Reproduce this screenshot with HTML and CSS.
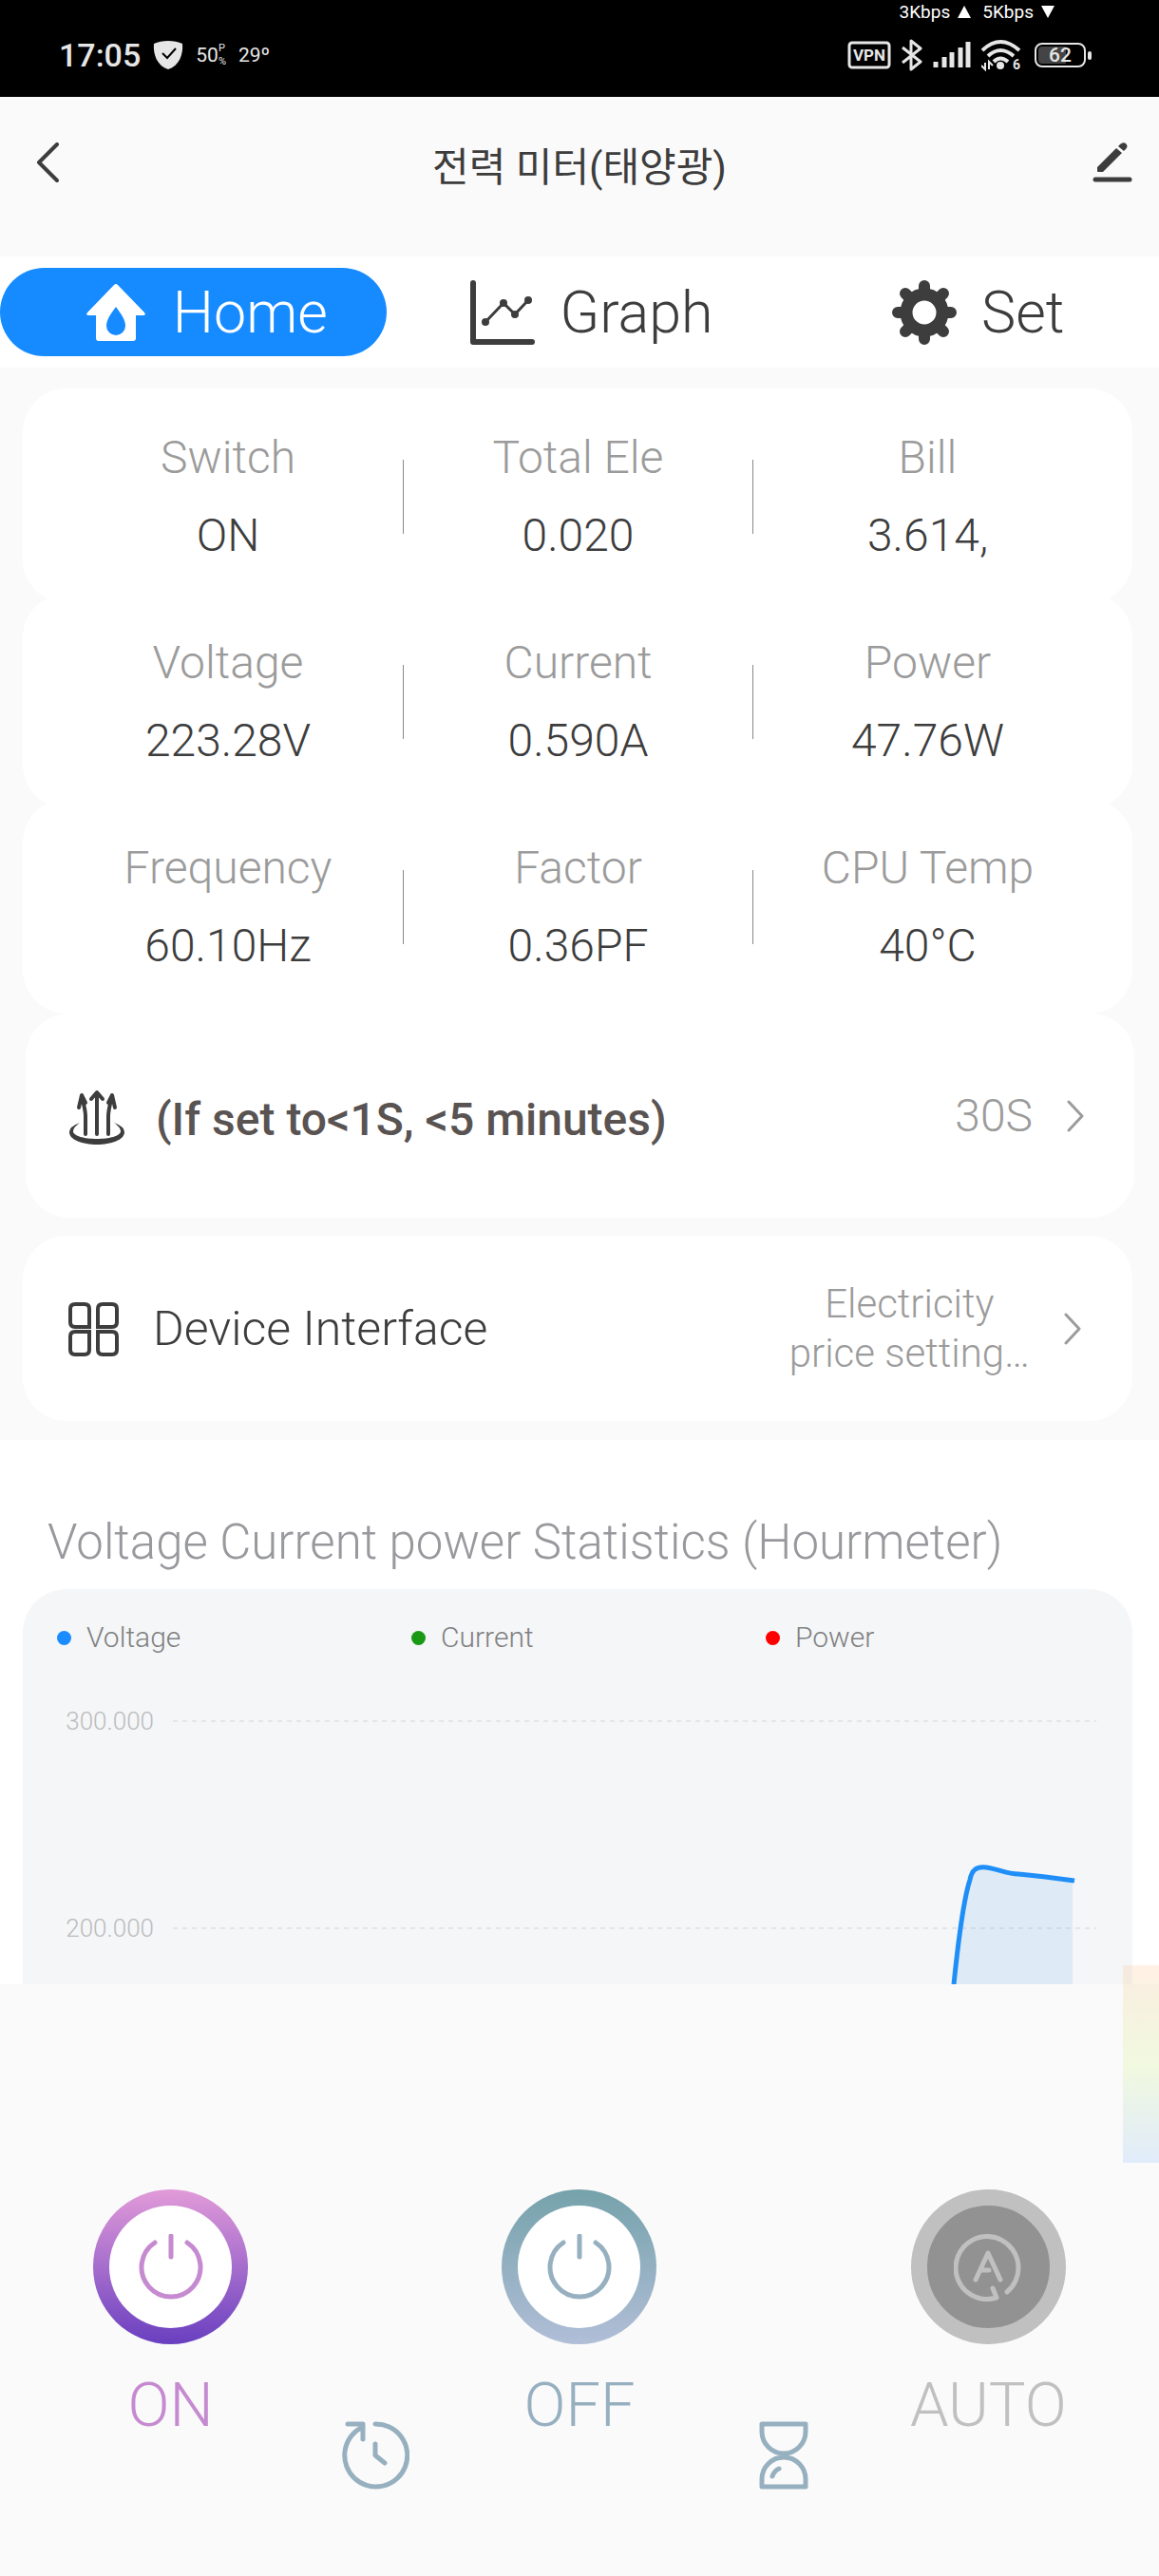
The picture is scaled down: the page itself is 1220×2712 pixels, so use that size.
FILE: index.html
```html
<!doctype html>
<html lang="ko">
<head>
	<meta charset="utf-8">
	<meta name="viewport" content="width=device-width">
	<title>전력 미터(태양광)</title>
	<link rel="stylesheet" href="styles.css">
</head>
<body>
<div class="status">
	<div class="status-net"><span>3Kbps</span><i class="up"></i><span>5Kbps</span><i class="down"></i></div>
	<div class="status-row">
		<div class="status-left">
			<span class="time">17:05</span>
			<svg width="32" height="30" viewBox="0 0 32 30"><path d="M16 0C11 0 5 1 1 3C0 14 4 26 16 30C28 26 32 14 31 3C27 1 21 0 16 0Z" fill="#e6e6e6"/><path d="M10 13L15 18L24 8" fill="none" stroke="#000" stroke-width="2"/></svg>
			<span class="mini">50<span class="mini-side"><b>P</b><b>%</b></span></span>
			<span class="mini">29º</span>
		</div>
		<div class="status-right">
			<svg width="46" height="30" viewBox="0 0 46 30"><rect x="2" y="2" width="42" height="26" rx="3" fill="none" stroke="#e6e6e6" stroke-width="3"/><text x="23" y="21" class="vpn">VPN</text></svg>
			<svg width="22" height="34" viewBox="0 0 22 34"><path d="M1 9L20 24L10 32V2L20 10L1 25" fill="none" stroke="#e6e6e6" stroke-width="3" stroke-linejoin="round"/></svg>
			<svg width="40" height="30" viewBox="0 0 40 30"><path d="M3 28V22M12 28V17M20 28V12M29 28V7M37 28V1" stroke="#e6e6e6" stroke-width="5"/></svg>
			<svg width="44" height="38" viewBox="0 0 44 38"><g fill="none" stroke="#e6e6e6" stroke-width="4"><path d="M1 14Q20-4 40 14"/><path d="M7 20Q20 8 34 20"/><path d="M13 26Q20 19 28 26"/></g><circle cx="20" cy="30" r="4" fill="#e6e6e6"/><path d="M4 27V34L0 30M8 34V26L12 30" fill="none" stroke="#e6e6e6" stroke-width="2"/><text x="37" y="34" class="wifi-gen">6</text></svg>
			<svg width="62" height="28" viewBox="0 0 62 28"><rect x="2" y="2" width="52" height="24" rx="7" fill="none" stroke="#e6e6e6" stroke-width="2"/><path d="M9 5H34V23H9Q5 23 5 19V9Q5 5 9 5Z" fill="#444"/><rect x="57" y="10" width="4" height="9" rx="2" fill="#e6e6e6"/><text x="28" y="21" class="battery">62</text></svg>
		</div>
	</div>
</div>

<header class="header">
	<button class="icon-btn" aria-label="Back"><svg width="24" height="42" viewBox="0 0 24 42"><path d="M22 2L3 21L22 40" fill="none" stroke="#3d3d3d" stroke-width="4" stroke-linecap="round" stroke-linejoin="round"/></svg></button>
	<h1>전력 미터(태양광)</h1>
	<button class="icon-btn" aria-label="Edit"><svg width="42" height="42" viewBox="0 0 42 42"><path d="M3 39H39" stroke="#3d3d3d" stroke-width="5" stroke-linecap="round"/><path d="M5 26L25 6L31 11L11 31H6Q5 31 5 30ZM27 4L29 2Q32-1 35 1Q38 4 35 7L33 9Z" fill="#3d3d3d"/></svg></button>
</header>

<nav class="tabs">
	<button class="tab cur">
		<svg width="68" height="68" viewBox="0 0 68 68"><path d="M34 4Q35 4 36 5L64 34Q66 37 63 37H55V61Q55 64 52 64H16Q13 64 13 61V37H5Q2 37 4 34L32 5Q33 4 34 4Z" fill="#fff"/><path d="M34 28C40 36 44 42 44 48A10 10 0 0 1 24 48C24 42 28 36 34 28Z" fill="#168bff"/></svg>
		<span>Home</span>
	</button>
	<button class="tab">
		<svg width="68" height="68" viewBox="0 0 68 68"><g fill="none" stroke="#3d3d3d" stroke-linecap="round" stroke-linejoin="round"><path d="M3 3V65H65" stroke-width="6"/><path d="M16 44L35 24L47 36L61 21" stroke-width="3"/></g><g fill="#3d3d3d"><circle cx="16" cy="44" r="4"/><circle cx="35" cy="24" r="4"/><circle cx="47" cy="36" r="4"/><circle cx="61" cy="21" r="4"/></g></svg>
		<span>Graph</span>
	</button>
	<button class="tab">
		<svg width="68" height="68" viewBox="0 0 68 68"><circle cx="34" cy="34" r="19" fill="none" stroke="#3d3d3d" stroke-width="13"/><g stroke="#3d3d3d" stroke-width="12" stroke-linecap="round"><path d="M34 6V14M34 54V62M6 34H14M54 34H62M14 14L20 20M48 48L54 54M14 54L20 48M48 20L54 14"/></g></svg>
		<span>Set</span>
	</button>
</nav>

<main>
	<section class="readings">
		<dl class="card">
			<div><dt>Switch</dt><dd>ON</dd></div>
			<div><dt>Total Ele</dt><dd>0.020</dd></div>
			<div><dt>Bill</dt><dd>3.614,</dd></div>
		</dl>
		<dl class="card">
			<div><dt>Voltage</dt><dd>223.28V</dd></div>
			<div><dt>Current</dt><dd>0.590A</dd></div>
			<div><dt>Power</dt><dd>47.76W</dd></div>
		</dl>
		<dl class="card">
			<div><dt>Frequency</dt><dd>60.10Hz</dd></div>
			<div><dt>Factor</dt><dd>0.36PF</dd></div>
			<div><dt>CPU Temp</dt><dd>40°C</dd></div>
		</dl>
	</section>

	<button class="row row-report">
		<svg width="60" height="60" viewBox="0 0 60 60"><g fill="none" stroke="#3d3d3d" stroke-width="4" stroke-linecap="round" stroke-linejoin="round"><path d="M30 49V6M24 12L30 5L36 12"/><path d="M18 49V30Q18 24 14 9M11 21L14 8L18 16"/><path d="M42 49V30Q42 24 46 9M49 21L46 8L42 16"/></g><path d="M12 43Q1 47 1 53C1 61 15 66 30 66S59 61 59 53Q59 47 48 43Q55 48 55 52C55 57 43 60 30 60S5 57 5 52Q5 48 12 43Z" transform="translate(0 -6)" fill="#3d3d3d"/></svg>
		<span class="row-name">(If set to&lt;1S, &lt;5 minutes)</span>
		<span class="row-value">30S</span>
		<svg width="18" height="34" viewBox="0 0 18 34"><path d="M2 2L16 17L2 32" class="chevron"/></svg>
	</button>

	<button class="row row-device">
		<svg width="60" height="60" viewBox="0 0 60 60"><g fill="none" stroke="#3d3d3d" stroke-width="4"><path d="M10 4H20Q25 4 25 9V28H10Q5 28 5 23V9Q5 4 10 4Z"/><path d="M39 4H49Q54 4 54 9V23Q54 28 49 28H34V9Q34 4 39 4Z"/><path d="M10 33H25V52Q25 57 20 57H10Q5 57 5 52V38Q5 33 10 33Z"/><path d="M34 33H49Q54 33 54 38V52Q54 57 49 57H39Q34 57 34 52Z"/></g></svg>
		<span class="row-name">Device Interface</span>
		<span class="row-note">Electricity<br>price setting…</span>
		<svg width="18" height="34" viewBox="0 0 18 34"><path d="M2 2L16 17L2 32" class="chevron"/></svg>
	</button>

	<section class="stats">
		<h2>Voltage Current power Statistics (Hourmeter)</h2>
		<div class="chart">
			<ul class="legend">
				<li class="voltage">Voltage</li>
				<li class="current">Current</li>
				<li class="power">Power</li>
			</ul>
			<svg class="plot" viewBox="0 0 1168 314">
				<g class="grid"><path d="M158 37H1130M158 255H1130"/></g>
				<text x="138" y="46">300.000</text>
				<text x="138" y="264">200.000</text>
				<path d="M980 314C986 256 991 222 997 204C999 194 1003 190 1014 191C1028 193 1036 198 1048 198C1070 200 1085 202 1105 204V314Z" fill="#1a8cf5" fill-opacity=".1"/>
				<path d="M980 314C986 256 991 222 997 204C999 194 1003 190 1014 191C1028 193 1036 198 1048 198C1070 200 1085 202 1107 205" fill="none" stroke="#1f8ef7" stroke-width="5"/>
			</svg>
		</div>
	</section>
</main>

<footer class="controls">
	<button class="power on">
		<span class="ring"><svg width="70" height="70" viewBox="0 0 70 70"><path d="M35 2V24M18 9A31 31 0 1 0 52 9"/></svg></span>
		<span>ON</span>
	</button>
	<button class="timer" aria-label="Schedule"><svg width="72" height="72" viewBox="0 0 72 72"><path d="M36 3A33 33 0 1 1 23 6M7 3H23V19M36 24V36L46 44"/></svg></button>
	<button class="power off">
		<span class="ring"><svg width="70" height="70" viewBox="0 0 70 70"><path d="M35 2V24M18 9A31 31 0 1 0 52 9"/></svg></span>
		<span>OFF</span>
	</button>
	<button class="timer" aria-label="Countdown"><svg width="72" height="72" viewBox="0 0 72 72"><path d="M13 3H59V11A23 23 0 0 1 13 11ZM13 69V61A23 23 0 0 1 59 61V69ZM24 58Q26 52 31 50"/></svg></button>
	<button class="power auto">
		<span class="ring"><svg width="72" height="72" viewBox="0 0 72 72"><path d="M56 62A33 33 0 1 0 45 68L41 58M23 49L36 21L49 49M28 39H37"/></svg></span>
		<span>AUTO</span>
	</button>
	<div class="side-glow"></div>
</footer>
</body>
</html>
```
FILE: styles.css
```css
*{margin:0;padding:0;box-sizing:border-box;}
body{display:flex;flex-direction:column;min-height:100vh;background:#fafafa;color:#3d3d3d;font-family:Roboto,"Noto Sans CJK KR",sans-serif;font-size:48px;font-weight:350;}
button{border:0;background:none;font:inherit;color:inherit;cursor:pointer;}
svg{display:block;flex:none;}

/* status bar */
.status{background:#000;color:#e6e6e6;padding-bottom:10px;font-weight:400;}
.status-net{display:flex;align-items:center;justify-content:flex-end;height:24px;padding-right:110px;font-size:19px;color:#fff;}
.status-net i{margin:0 12px 0 8px;border:7px solid transparent;border-top:0;border-bottom:13px solid #fff;}
.status-net .down{margin-right:0;border-bottom:0;border-top:13px solid #fff;}
.status-row{display:flex;align-items:center;justify-content:space-between;height:68px;padding:0 70px 0 62px;}
.status-left{display:flex;align-items:center;gap:13px;}
.status-right{display:flex;align-items:center;gap:11px;}
.time{font-size:34px;font-weight:500;}
.mini{display:flex;font-size:21px;line-height:28px;}
.mini-side{display:flex;flex-direction:column;font-size:11px;line-height:14px;}
.mini-side b{font-weight:400;}
.vpn,.wifi-gen,.battery{fill:#e6e6e6;font-weight:700;text-anchor:middle;}
.vpn{font-size:17px;}
.wifi-gen{font-size:14px;}
.battery{font-size:21px;font-weight:500;}

/* header */
.header{display:flex;justify-content:space-between;height:168px;padding:48px 28px 0;}
.header h1{font-size:42px;line-height:54px;font-weight:400;}
.icon-btn{display:flex;width:42px;height:44px;}
.header .icon-btn:first-child{padding-left:10px;}

/* tabs */
.tabs{display:grid;grid-template-columns:repeat(3,1fr);background:#fff;padding:12px 0;}
.tab{display:flex;align-items:center;justify-content:center;gap:26px;height:93px;padding-left:26px;border-radius:47px;font-size:61px;}
.tab.cur{background:#168bff;color:#fff;}

/* readings */
.readings{padding:22px 28px 0 24px;}
.card{display:grid;grid-template-columns:repeat(3,1fr);align-items:center;height:226px;padding:2px 32px 0;border-radius:46px;background:#fff;}
.card+.card{margin-top:-10px;}
.card div{display:flex;flex-direction:column;justify-content:center;height:78px;text-align:center;}
.card div+div{border-left:1px solid #888;}
.card dt,.card dd{line-height:82px;}
.card dt{color:#9b9b9b;}

/* rows */
.row{display:flex;align-items:center;border-radius:46px;background:#fff;text-align:left;}
.row-name{flex:1;padding-left:32px;}
.row-report{width:calc(100% - 53px);height:215px;margin:0 26px 0 27px;padding:0 53px 0 45px;}
.row-report .row-name{padding-top:8px;color:#595352;font-weight:500;}
.row-value{padding-right:36px;color:#9b9b9b;}
.row-device{width:calc(100% - 52px);height:195px;margin:19px 28px 20px 24px;padding:0 54px 0 45px;}
.row-device .row-name{font-size:50px;}
.row-note{padding-right:36px;color:#9b9b9b;font-size:42px;line-height:52px;text-align:center;}
.chevron{fill:none;stroke:#9b9b9b;stroke-width:3;stroke-linecap:round;stroke-linejoin:round;}

/* statistics */
.stats{padding:74px 28px 0 24px;background:#fff;}
.stats h2{padding-left:26px;color:#98999d;font-size:51px;line-height:68px;font-weight:350;}
.chart{margin-top:15px;border-radius:46px 46px 0 0;background:#f4f6f8;}
.legend{display:grid;grid-template-columns:373px 373px 1fr;height:102px;padding:30px 36px 0;list-style:none;color:#808080;font-size:30px;line-height:42px;}
.legend li{display:flex;align-items:center;gap:16px;height:42px;}
.legend li:before{content:"";width:15px;height:15px;border-radius:50%;background:#1a8cff;}
.legend .current:before{background:#1a9a14;}
.legend .power:before{background:#f00;}
.plot{width:100%;height:auto;}
.plot text{fill:#bcbcbc;font-size:26px;text-anchor:end;}
.grid{stroke:#e4e5e6;stroke-width:2;stroke-dasharray:5 5;}

/* bottom controls */
.controls{position:relative;flex:1;display:grid;grid-template-columns:repeat(5,1fr);align-content:start;padding:216px 72px 0;font-size:65px;}
.controls .power{display:flex;flex-direction:column;align-items:center;gap:24px;line-height:80px;}
.ring{display:flex;align-items:center;justify-content:center;width:163px;height:163px;border:17px solid transparent;border-radius:50%;}
.controls path{fill:none;stroke:currentColor;stroke-width:5;stroke-linecap:round;stroke-linejoin:round;}
.on{color:#c58ad0;}
.on .ring{background:linear-gradient(#fff,#fff) padding-box,linear-gradient(#e29bd9,#693fc0) border-box;}
.off{color:#97b0c0;}
.off .ring{background:linear-gradient(#fff,#fff) padding-box,linear-gradient(#75a2ab,#b1bed7) border-box;}
.auto{color:#c0c0c0;}
.auto .ring{border-color:#c0c0c0;background:#929292;}
.timer{display:flex;justify-content:center;padding-top:244px;color:#97b0c0;}
.side-glow{position:absolute;top:-20px;right:0;width:38px;height:208px;background:linear-gradient(rgba(255,130,20,.11),rgba(180,240,40,.13) 50%,rgba(40,130,255,.12));}
```
